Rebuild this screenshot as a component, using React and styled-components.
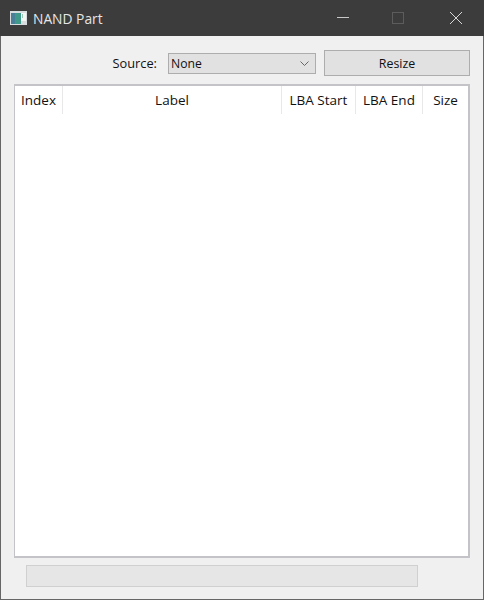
import React from "react"
import styled, { createGlobalStyle } from "styled-components"

const columns = [
  { label: "Index", width: 48 },
  { label: "Label", width: 219 },
  { label: "LBA Start", width: 74 },
  { label: "LBA End", width: 67 },
  { label: "Size", width: 45 },
]

function App() {
  return (
    <Window>
      <GlobalStyle />
      <TitleBar>
        <AppIcon viewBox="0 0 17 14">
          <rect x="0" y="0" width="17" height="14" fill="#d8dde0" />
          <rect x="1" y="2" width="10" height="11" fill="#3f9a8c" />
          <rect x="1" y="2" width="4" height="11" fill="#4a7f9a" />
          <rect x="11" y="2" width="5" height="8" fill="#f4f6f4" />
          <rect x="12" y="3" width="1" height="4" fill="#9cc7b4" />
        </AppIcon>
        <Title>NAND Part</Title>
        <WindowButtons>
          <WindowIcon viewBox="0 0 12 12" $gap={0}>
            <path d="M0 5.5H12" stroke="#c8c8c8" strokeWidth="1" />
          </WindowIcon>
          <WindowIcon viewBox="0 0 12 12" $gap={43}>
            <rect x="0.5" y="0.5" width="11" height="11" fill="none" stroke="#5c5c5c" strokeWidth="1" />
          </WindowIcon>
          <WindowIcon viewBox="0 0 12 12" $gap={46}>
            <path d="M0 0L12 12M12 0L0 12" stroke="#d8d8d8" strokeWidth="1" />
          </WindowIcon>
        </WindowButtons>
      </TitleBar>
      <Content>
        <Toolbar>
          <SourceLabel>Source:</SourceLabel>
          <Combo>
            <span>None</span>
            <Chevron viewBox="0 0 9 5">
              <path d="M0.5 0.5L4.5 4.5L8.5 0.5" fill="none" stroke="#666" strokeWidth="1" />
            </Chevron>
          </Combo>
          <ResizeButton>Resize</ResizeButton>
        </Toolbar>
        <Table>
          <HeaderRow>
            {columns.map((col) => (
              <HeaderCell key={col.label} $width={col.width}>{col.label}</HeaderCell>
            ))}
          </HeaderRow>
        </Table>
        <Progress />
      </Content>
    </Window>
  )
}

export default App

const GlobalStyle = createGlobalStyle`
  html, body {
    margin: 0;
    padding: 0;
    background: #f0f0f0;
  }
`
const Window = styled.div`
  box-sizing: border-box;
  width: 484px;
  height: 600px;
  display: flex;
  flex-direction: column;
  background: #f0f0f0;
  border: 1px solid #666;
  border-top: 0;
  font-family: "Open Sans", "Noto Sans", sans-serif;
  font-size: 13.5px;
  color: #111;
`
const TitleBar = styled.div`
  height: 36px;
  flex-shrink: 0;
  margin: 0 -1px;
  display: flex;
  align-items: center;
  padding-left: 10px;
  background: #3c3c3c;
`
const AppIcon = styled.svg`
  width: 17px;
  height: 14px;
  margin-top: -1px;
`
const Title = styled.div`
  margin-left: 6px;
  font-size: 13.8px;
  color: #e6e6e6;
`
const WindowButtons = styled.div`
  margin-left: auto;
  margin-right: 22px;
  display: flex;
  align-items: center;
`
const WindowIcon = styled.svg`
  width: 12px;
  height: 12px;
  margin-left: ${(p) => p.$gap}px;
`
const Content = styled.div`
  flex: 1;
  display: flex;
  flex-direction: column;
  padding: 14px 13px 13px;
`
const Toolbar = styled.div`
  height: 26px;
  display: flex;
  align-items: center;
  justify-content: flex-end;
`
const SourceLabel = styled.span`
  margin-right: 11px;
  font-size: 12.8px;
`
const Combo = styled.div`
  box-sizing: border-box;
  width: 148px;
  height: 21px;
  display: flex;
  align-items: center;
  justify-content: space-between;
  padding: 0 6px 0 2px;
  background: #e1e1e1;
  border: 1px solid #adadad;
  font-size: 12.2px;
`
const Chevron = styled.svg`
  width: 9px;
  height: 5px;
`
const ResizeButton = styled.div`
  box-sizing: border-box;
  width: 146px;
  height: 26px;
  margin-left: 8px;
  display: flex;
  align-items: center;
  justify-content: center;
  background: #e1e1e1;
  border: 1px solid #adadad;
  font-size: 12.4px;
`
const Table = styled.div`
  box-sizing: border-box;
  width: 456px;
  height: 474px;
  margin-top: 8px;
  background: #fff;
  border: 1px solid #c4c4c8;
  border-width: 2px 2px 2px 1px;
`
const HeaderRow = styled.div`
  display: flex;
  height: 28px;
`
const HeaderCell = styled.div`
  box-sizing: border-box;
  flex: 0 0 ${(p) => p.$width}px;
  display: flex;
  align-items: center;
  justify-content: center;
  background: #fff;
  border-right: 1px solid #e8e8e8;
  &:last-child {
    border-right: 0;
  }
`
const Progress = styled.div`
  box-sizing: border-box;
  width: 392px;
  height: 22px;
  margin: 7px 0 0 12px;
  background: #e6e6e6;
  border: 1px solid #d0d0d0;
`
